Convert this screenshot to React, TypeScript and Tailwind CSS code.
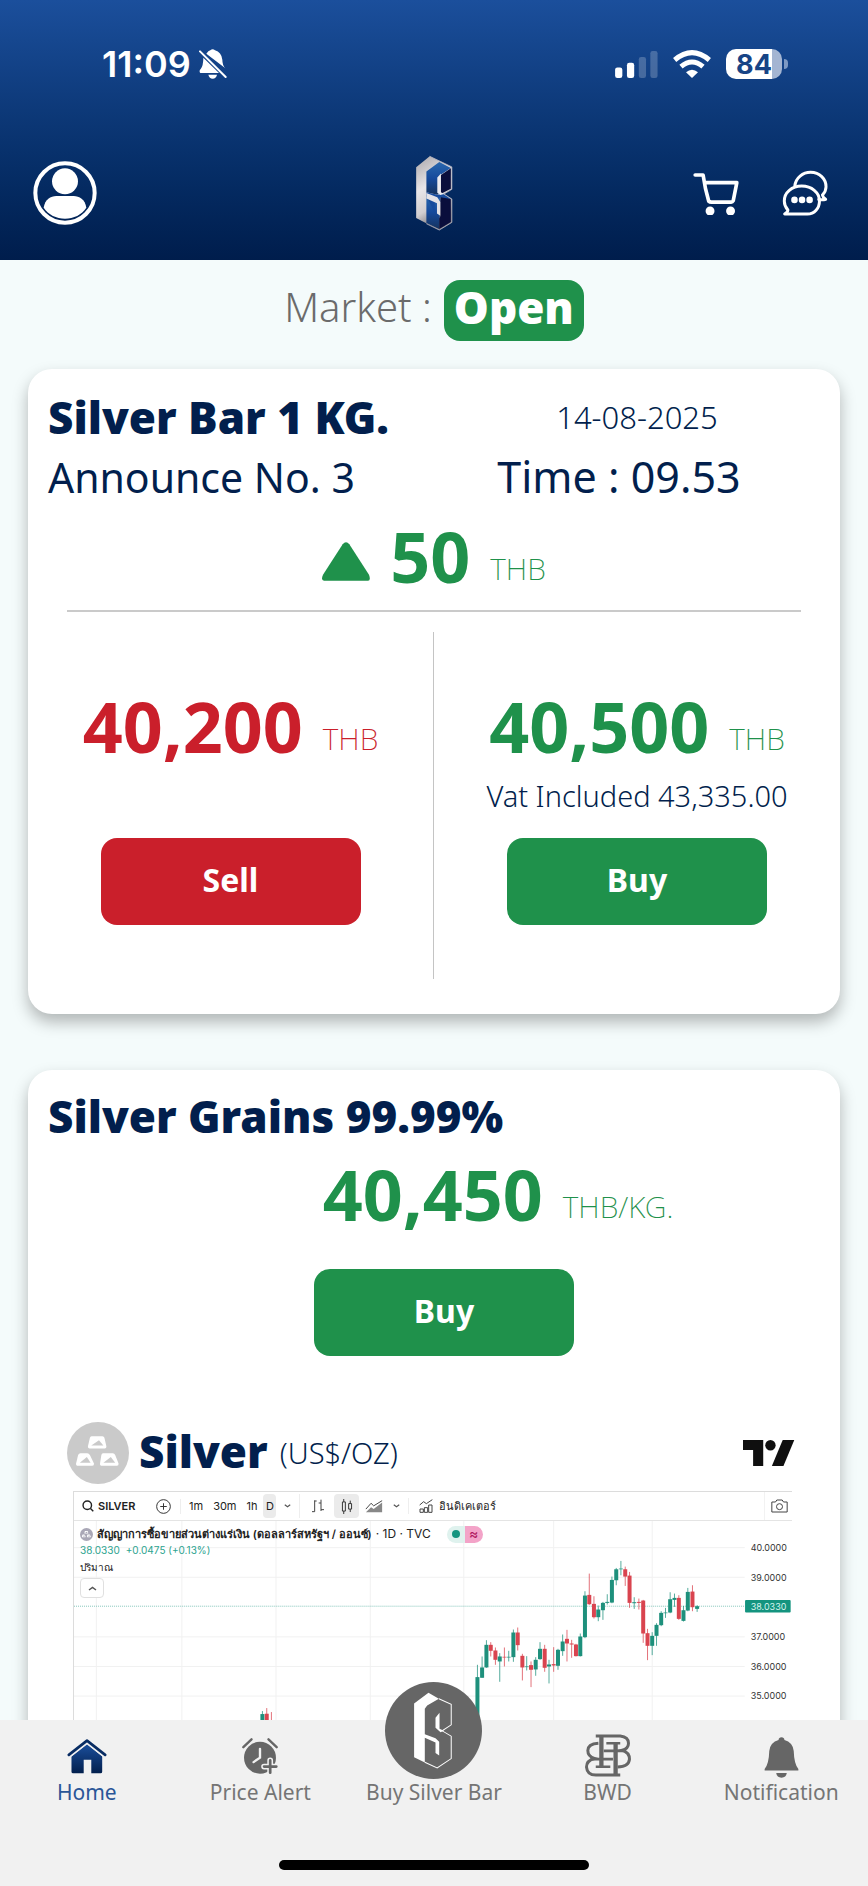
import type { ReactNode } from "react";

type Candle = [x: number, high: number, low: number, top: number, bottom: number, up: 0 | 1];

const candles: Candle[] = [
  [-535, 694, 780, 703, 770, 1],
  [-522, 685, 790, 702, 780, 0],
  [-508, 697, 780, 740, 760, 0],
  [111, 555, 760, 592, 740, 1],
  [125, 530, 594, 563, 594, 1],
  [138, 481, 564, 495, 563, 1],
  [151, 487, 530, 495, 513, 0],
  [165, 503, 555, 512, 540, 0],
  [178, 520, 606, 530, 545, 1],
  [192, 503, 560, 531, 533, 0],
  [205, 513, 545, 531, 533, 1],
  [219, 449, 546, 458, 532, 1],
  [232, 443, 512, 458, 496, 0],
  [246, 522, 602, 528, 563, 0],
  [259, 529, 572, 560, 562, 1],
  [272, 545, 622, 556, 570, 0],
  [286, 532, 588, 540, 569, 1],
  [299, 487, 540, 507, 538, 1],
  [313, 495, 576, 507, 564, 0],
  [326, 540, 611, 554, 560, 1],
  [340, 502, 576, 553, 557, 0],
  [353, 507, 570, 510, 558, 1],
  [367, 464, 528, 485, 514, 1],
  [380, 450, 545, 477, 491, 0],
  [394, 480, 534, 491, 494, 0],
  [407, 492, 530, 494, 529, 0],
  [420, 461, 530, 470, 529, 1],
  [434, 334, 475, 347, 472, 1],
  [447, 281, 375, 345, 373, 0],
  [461, 349, 416, 372, 412, 0],
  [474, 377, 424, 389, 412, 1],
  [488, 366, 420, 369, 391, 1],
  [501, 343, 374, 366, 369, 1],
  [515, 290, 370, 300, 368, 1],
  [528, 264, 316, 268, 301, 1],
  [542, 243, 286, 266, 268, 1],
  [555, 260, 318, 268, 290, 0],
  [568, 276, 384, 287, 369, 0],
  [582, 352, 387, 367, 370, 1],
  [596, 356, 389, 366, 369, 0],
  [609, 360, 489, 362, 461, 0],
  [622, 447, 541, 460, 498, 0],
  [636, 457, 526, 468, 498, 1],
  [649, 430, 498, 435, 468, 1],
  [663, 394, 439, 399, 436, 1],
  [676, 384, 414, 398, 400, 1],
  [690, 337, 400, 358, 398, 1],
  [703, 341, 381, 354, 360, 1],
  [716, 346, 420, 354, 417, 0],
  [730, 378, 425, 391, 423, 1],
  [743, 324, 394, 336, 392, 1],
  [757, 316, 394, 335, 382, 0],
  [771, 376, 396, 379, 387, 1],
];

const priceLabels: [string, number][] = [
  ["40.0000", 203],
  ["39.0000", 292],
  ["37.0000", 471],
  ["36.0000", 560],
  ["35.0000", 649],
];

function BellOff() {
  return (
    <svg viewBox="0 0 84 90" className="h-[30px] w-7" fill="white" aria-hidden="true">
      <path d="M22 14Q28 5 34 4Q41-2 48 4Q67 9 70 32Q70 48 79 58Z" />
      <path d="M13 26L60 72H4Q-1 66 5 60Q13 50 13 26Z" />
      <path d="M28 77H54Q51 89 41 89Q31 89 28 77Z" />
      <path d="M3 7L80 84" stroke="white" strokeWidth="6" strokeLinecap="round" />
    </svg>
  );
}

function Signal() {
  return (
    <svg viewBox="0 0 130 82" className="h-[27px] w-[43px]" fill="white" aria-hidden="true">
      <rect x="0" y="50" width="22" height="32" rx="7" />
      <rect x="36" y="36" width="22" height="46" rx="7" />
      <rect x="72" y="18" width="22" height="64" rx="7" opacity=".22" />
      <rect x="107" y="0" width="22" height="82" rx="7" opacity=".22" />
    </svg>
  );
}

function Wifi() {
  return (
    <svg viewBox="0 0 114 84" className="h-7 w-[38px]" fill="none" stroke="white" strokeWidth="15" aria-hidden="true">
      <path d="M5 30Q57-14 109 30" />
      <path d="M24 50Q57 22 90 50" />
      <path d="M39 67Q57 51 75 67L57 84Z" fill="white" stroke="none" />
    </svg>
  );
}

function Avatar() {
  return (
    <svg viewBox="0 0 192 192" className="size-16" fill="white" aria-hidden="true">
      <circle cx="96" cy="96" r="89" fill="none" stroke="white" strokeWidth="12" />
      <circle cx="96" cy="61" r="39" />
      <path d="M32 140C36 115 53 105 70 105H122C139 105 156 115 160 140C146 161 122 173 96 173S46 161 32 140Z" />
    </svg>
  );
}

function BrandLogo() {
  return (
    <svg viewBox="46 38 112 230" className="h-[76px] w-[38px]" role="img" aria-label="Silver">
      <defs>
        <linearGradient id="steel" x1="0" y1="0" x2=".3" y2="1">
          <stop offset="0" stopColor="#a9a6aa" />
          <stop offset=".45" stopColor="#e9e6e8" />
          <stop offset=".75" stopColor="#d2ced0" />
          <stop offset="1" stopColor="#77747a" />
        </linearGradient>
        <linearGradient id="face" x1="0" y1="0" x2="0" y2="1">
          <stop offset="0" stopColor="#2a68ae" />
          <stop offset=".5" stopColor="#164a9c" />
          <stop offset="1" stopColor="#15335f" />
        </linearGradient>
      </defs>
      <path d="M48 75L89 42L156 74V142L132 156L156 171V242L118 265L48 229Z" fill="url(#steel)" />
      <path d="M79 88L118 59L153 77L122 98V151L112 158L79 151Z" fill="url(#face)" />
      <path d="M79 160L122 159L118 262L79 244Z" fill="url(#face)" />
      <path d="M153 78V140L122 156V99Z" fill="#0a0e3c" />
      <path d="M122 156L153 172V241L118 262V230L121 224V184Z" fill="#0a0e3c" />
      <path d="M79 151L112 158L130 155L153 171L122 166L104 174V212L79 162Z" fill="#174b9d" />
      <path d="M79 153L112 166L121 180V222L111 215V184L79 170Z" fill="#e4e2e6" />
      <path d="M112 106L123 94V151L133 156L121 159L112 152Z" fill="#ecebef" />
      <path d="M89 42L156 74V142L132 156L156 171V242L118 265L79 246" fill="none" stroke="#b6b5c2" strokeWidth="2.5" />
    </svg>
  );
}

function CartIcon() {
  return (
    <svg viewBox="0 0 138 130" className="h-[43px] w-[46px]" fill="none" stroke="white" strokeWidth="11" strokeLinecap="round" strokeLinejoin="round" aria-hidden="true">
      <path d="M6 9H30Q36 52 47 88Q50 91 55 91H115Q119 91 121 87L132 32H34" />
      <circle cx="51" cy="118" r="8" fill="white" />
      <circle cx="113" cy="118" r="8" fill="white" />
    </svg>
  );
}

function ChatIcon() {
  return (
    <svg viewBox="0 0 138 140" className="h-[46px] w-[46px]" fill="none" stroke="white" strokeWidth="9" strokeLinecap="round" strokeLinejoin="round" aria-hidden="true">
      <path d="M38 48C41 24 62 7 86 7C114 7 133 27 133 51C133 61 129 69 122 76C123 82 127 86 132 89C126 91 118 91 111 90" />
      <path d="M7 134C12 131 17 127 17 122C10 114 6 104 6 94C6 68 29 49 59 49C89 49 113 68 113 94C113 116 98 134 76 134Z" />
      <g fill="white" stroke="none">
        <circle cx="37" cy="91" r="10" />
        <circle cx="60" cy="91" r="10" />
        <circle cx="83" cy="91" r="10" />
      </g>
    </svg>
  );
}

function IngotIcon({ className, disc }: { className: string; disc: string }) {
  return (
    <svg viewBox="0 0 184 184" className={className} aria-hidden="true">
      <circle cx="92" cy="92" r="92" fill={disc} />
      <g fill="white">
        <path d="M73 42H105Q110 42 111 47L117 73Q117 79 112 79H67Q62 79 62 73L68 47Q69 42 73 42Z" />
        <path d="M40 93H60Q65 93 68 98L80 123Q81 130 75 130H33Q26 130 27 123L33 98Q35 93 40 93Z" />
        <path d="M107 93H136Q141 93 143 98L153 123Q154 130 148 130H104Q97 130 98 123L102 98Q103 93 107 93Z" />
      </g>
      <g fill={disc}>
        <path d="M72 70L95 54L108 70Z" />
        <path d="M38 121L59 104L70 121Z" />
        <path d="M108 121L130 104L143 121Z" />
      </g>
    </svg>
  );
}

function TradingViewMark() {
  return (
    <svg viewBox="0 0 36 18" className="h-[26px] w-[52px]" fill="#0f0f0f" role="img" aria-label="TradingView">
      <path d="M14 18H7V7H0V0H14V18Z" />
      <circle cx="19" cy="3.6" r="3.6" />
      <path d="M28 18H20L27.500 0H35.500Z" />
    </svg>
  );
}

function HomeIcon() {
  return (
    <svg viewBox="0 0 118 106" className="h-[35px] w-10" aria-hidden="true">
      <defs>
        <linearGradient id="home" x1="0" y1="0" x2="0" y2="1">
          <stop offset="0" stopColor="#1b4f9c" />
          <stop offset="1" stopColor="#021f4d" />
        </linearGradient>
      </defs>
      <path d="M12 52L59 15L105 52V99Q105 104 100 104H72V63H49V104H17Q12 104 12 99Z" fill="url(#home)" />
      <path d="M4 50L59 7L114 50" fill="none" stroke="#f1f1f1" strokeWidth="15" />
      <path d="M4 48L59 5L114 48" fill="none" stroke="#082c63" strokeWidth="8" strokeLinecap="round" strokeLinejoin="round" />
    </svg>
  );
}

function AlarmIcon() {
  return (
    <svg viewBox="0 0 106 106" className="size-9" fill="none" strokeLinecap="round" aria-hidden="true">
      <circle cx="53" cy="58" r="47" fill="#666" />
      <path d="M4 27L28 4M78 4L102 27" stroke="#666" strokeWidth="7" />
      <path d="M53 32V58L34 71" stroke="#f1f1f1" strokeWidth="7" />
      <path d="M83 66V102M65 84H101" stroke="#f1f1f1" strokeWidth="17" />
      <path d="M83 66V102M65 84H101" stroke="#666" strokeWidth="8" />
    </svg>
  );
}

function SilverBarIcon() {
  return (
    <svg viewBox="12 11 290 290" className="-mb-[5px] size-[97px]" aria-hidden="true">
      <circle cx="157" cy="156" r="145" fill="#666" />
      <path d="M99 75L142 43L173 61L138 81L131 91V167L163 179L174 190V231L163 223V192L131 178V252L99 236Z" fill="white" />
      <path d="M163 118L175 103V151L188 157L178 161L163 148Z" fill="white" />
      <path d="M173 61L210 78V139L183 157L210 173V240L168 268L131 251" fill="none" stroke="white" strokeWidth="3" />
    </svg>
  );
}

function MonogramIcon() {
  return (
    <svg viewBox="0 0 138 130" className="-mb-[3px] h-[43px] w-[46px]" fill="none" stroke="#666" strokeWidth="9" aria-hidden="true">
      <path d="M32 6H106Q131 9 131 28Q131 44 112 49Q134 56 134 76Q132 99 98 100" />
      <path d="M49 6V100M92 28V122" strokeWidth="13" />
      <path d="M64 28H106M56 51H114M32 99H76M16 76H84" strokeWidth="8" />
      <path d="M40 28Q8 30 8 50Q8 68 28 74Q4 80 4 100Q6 124 32 124H106" />
    </svg>
  );
}

function BellIcon() {
  return (
    <svg viewBox="0 0 104 124" className="-mb-1 h-[41px] w-[35px]" fill="#666" aria-hidden="true">
      <path d="M43 9Q44 1 52 1Q60 1 61 9Q86 16 89 42Q90 80 103 97V101H1V97Q14 80 15 42Q18 16 43 9Z" />
      <path d="M36 109H68Q66 123 52 123Q38 123 36 109Z" />
    </svg>
  );
}

function Chevron({ className }: { className: string }) {
  return (
    <svg viewBox="0 0 18 10" className={className} fill="none" stroke="#555" strokeWidth="3" aria-hidden="true">
      <path d="M2 2L9 7L16 2" />
    </svg>
  );
}

function Price({ amount, unit, tone }: { amount: string; unit: string; tone: string }) {
  return (
    <p className={`flex items-end gap-5 whitespace-nowrap ${tone}`}>
      <span className="text-[70px] font-bold leading-[72px]">{amount}</span>
      <span className="mb-2 text-[30px] font-extralight leading-[30px]">{unit}</span>
    </p>
  );
}

function ActionButton({ children, tone }: { children: ReactNode; tone: string }) {
  return (
    <button type="button" className={`h-[87px] w-[260px] rounded-2xl pb-1 text-[32px] font-bold text-white ${tone}`}>
      {children}
    </button>
  );
}

function Chart() {
  return (
    <svg viewBox="0 0 2157 1000" className="block w-full" role="img" aria-label="Silver daily price chart">
      <g stroke="#f1f1f1" strokeWidth="3">
        <path d="M67 0V1000M324 0V1000M607 0V1000M890 0V1000M1171 0V1000M1441 0V1000M1737 0V1000" />
        <path d="M0 80H2015M0 169H2015M0 348H2015M0 437H2015M0 526H2015M0 615H2015" />
      </g>
      <path d="M0 256H2016" stroke="#6dbcae" strokeWidth="2.500" strokeDasharray="3 3" />
      <g transform="translate(1101 -123)">
        {candles.map(([x, high, low, top, bottom, up]) => {
          const color = up ? "#1e907c" : "#d9444f";
          return (
            <g key={x} fill={color}>
              <rect x={x - 1.5} y={high} width="3" height={low - high} opacity=".75" />
              <rect x={x - 6} y={top} width="12" height={bottom - top} />
            </g>
          );
        })}
        <rect x="915" y="360" width="137" height="38" rx="3" fill="#14947f" />
        <g fontFamily="Inter, sans-serif" fontSize="27" fill="#333">
          {priceLabels.map(([label, y]) => (
            <text key={label} x="932" y={y + 10}>
              {label}
            </text>
          ))}
          <text x="932" y="389" fill="#d8f5ee">
            38.0330
          </text>
        </g>
      </g>
    </svg>
  );
}

function ChartWidget() {
  return (
    <div className="ml-[45px] mr-12 mt-[7px] border-l border-t border-[#dcdcdc] font-['Inter','Noto_Sans',sans-serif] text-[#222]">
      <div className="flex h-[29px] items-center border-b border-[#e4e4e4] text-[11px]">
        <button type="button" className="flex w-[72px] items-center gap-1 pl-2 font-semibold">
          <svg viewBox="0 0 34 34" className="size-3 shrink-0" fill="none" stroke="#222" strokeWidth="4" aria-hidden="true">
            <circle cx="15" cy="15" r="12" />
            <path d="M24 24L32 32" />
          </svg>
          SILVER
        </button>
        <button type="button" aria-label="Compare" className="flex w-[35px] justify-center border-r border-[#eee]">
          <svg viewBox="0 0 46 46" className="size-[15px]" fill="none" stroke="#333" strokeWidth="3" aria-hidden="true">
            <circle cx="23" cy="23" r="21" />
            <path d="M23 13V33M13 23H33" />
          </svg>
        </button>
        <div className="flex items-center gap-2.5 pl-2">
          <button type="button">1m</button>
          <button type="button">30m</button>
          <button type="button">1h</button>
          <button type="button" className="-ml-1 h-6 w-[13px] rounded bg-[#ebebeb]">D</button>
          <button type="button" aria-label="More intervals" className="-ml-0.5">
            <Chevron className="h-1 w-[7px]" />
          </button>
        </div>
        <div className="ml-2 flex items-center gap-2.5 border-l border-[#eee] pl-3">
          <button type="button" aria-label="Bars">
            <svg viewBox="0 0 36 42" className="h-3.5 w-3" fill="none" stroke="#444" strokeWidth="3" aria-hidden="true">
              <path d="M0 38H8V4M8 6H14M20 12H27M27 2V36M27 32H36" />
            </svg>
          </button>
          <button type="button" aria-label="Candles" className="grid h-6 w-[25px] place-items-center rounded bg-[#ebebeb]">
            <svg viewBox="0 0 34 46" className="h-[15px] w-3" fill="none" stroke="#333" strokeWidth="3" aria-hidden="true">
              <path d="M3 9H12V37H3ZM7 0V9M7 37V46M22 14H31V31H22ZM27 5V14M27 31V40" />
            </svg>
          </button>
          <button type="button" aria-label="Area" className="-ml-1">
            <svg viewBox="0 0 54 40" className="h-[13px] w-[18px]" aria-hidden="true">
              <path d="M2 38L18 22L26 28L52 8V38Z" fill="#888" />
              <path d="M2 28L18 10L26 18L52 2" fill="none" stroke="#444" strokeWidth="3" />
            </svg>
          </button>
          <button type="button" aria-label="More chart types">
            <Chevron className="h-1 w-[7px]" />
          </button>
        </div>
        <button type="button" className="ml-2 flex items-center gap-1.5 whitespace-nowrap border-l border-[#eee] pl-2.5 text-[11px] font-medium">
          <svg viewBox="0 0 42 42" className="size-3.5" fill="none" stroke="#444" strokeWidth="3" aria-hidden="true">
            <path d="M2 18L14 8L22 14L40 2M3 40V30H13V40ZM16 40V26H26V40ZM29 40V18H39V40Z" />
          </svg>
          อินดิเคเตอร์
        </button>
        <button type="button" aria-label="Take a snapshot" className="ml-auto flex h-full items-center border-l border-[#f2f2f2] pl-1.5 pr-1">
          <svg viewBox="0 0 50 42" className="h-3.5 w-[17px]" fill="none" stroke="#444" strokeWidth="3" aria-hidden="true">
            <path d="M2 9H13L17 3H33L37 9H48V39H2Z" strokeLinejoin="round" />
            <circle cx="25" cy="23" r="9" />
          </svg>
        </button>
      </div>
      <div className="relative">
        <Chart />
        <div className="absolute left-1.5 top-1 flex flex-col items-start">
          <div className="flex h-[18px] items-center gap-1 whitespace-nowrap text-[12px] font-medium">
            <IngotIcon className="size-[13px]" disc="#a9a7b6" />
            <span className="text-[11px] font-semibold">สัญญาการซื้อขายส่วนต่างแร่เงิน (ดอลลาร์สหรัฐฯ / ออนซ์)</span>
            <span className="font-normal">· 1D · TVC</span>
            <span className="ml-3 flex h-[17px] w-9 overflow-hidden rounded-full">
              <span className="grid flex-1 place-items-center bg-[#dff2ee]">
                <span className="size-2 rounded-full bg-[#159580]" />
              </span>
              <span className="grid flex-1 place-items-center bg-[#f3a3c8] text-[14px] leading-none text-[#b0175f]">≈</span>
            </span>
          </div>
          <p className="flex gap-1.5 text-[10px] leading-[15px] text-[#2ba38f]">
            <span>38.0330</span>
            <span>+0.0475 (+0.13%)</span>
          </p>
          <p className="text-[10px] leading-[18px]">ปริมาณ</p>
          <button type="button" aria-label="Collapse legend" className="mt-0.5 grid h-5 w-6 place-items-center rounded-sm border border-[#e0e0e0] bg-white">
            <Chevron className="h-[5px] w-[9px] rotate-180" />
          </button>
        </div>
      </div>
    </div>
  );
}

function NavItem({ label, icon, active = false }: { label: string; icon: ReactNode; active?: boolean }) {
  return (
    <a href="#" className={`flex flex-col items-center whitespace-nowrap text-[21px] leading-7 ${active ? "text-[#2a5698]" : "text-[#757575]"}`}>
      <span className="flex h-[58px] items-end justify-center">{icon}</span>
      <span className="mt-1">{label}</span>
    </a>
  );
}

export default function App() {
  return (
    <div className="flex h-screen flex-col overflow-hidden bg-[#f4fbfb] font-['Noto_Sans','Open_Sans',sans-serif] text-[#021f4d]">
      <header className="flex h-[260px] shrink-0 flex-col bg-linear-to-b from-[#1b4f9c] to-[#001d4c]">
        <div className="flex h-32 items-center justify-between pl-[102px] pr-20 text-white">
          <div className="flex items-center gap-2">
            <span className="font-['Inter'] text-[36px] font-semibold">11:09</span>
            <BellOff />
          </div>
          <div className="flex items-center gap-[15px]">
            <Signal />
            <Wifi />
            <div className="flex items-center gap-0.5">
              <div className="flex h-[30px] w-14 items-center justify-center rounded-[10px] bg-linear-to-r from-white from-83% to-[#a4b5d2] to-83% font-['Inter'] text-[27px] font-bold leading-none text-[#174486]">
                84
              </div>
              <span className="h-2.5 w-1 rounded-r-full bg-[#7d99c4]" />
            </div>
          </div>
        </div>
        <div className="grid h-[130px] grid-cols-3 items-center pl-[33px] pr-10">
          <button type="button" aria-label="Profile" className="justify-self-start">
            <Avatar />
          </button>
          <div className="justify-self-center pl-1.5">
            <BrandLogo />
          </div>
          <div className="flex items-center gap-[43px] justify-self-end">
            <button type="button" aria-label="Cart">
              <CartIcon />
            </button>
            <button type="button" aria-label="Messages">
              <ChatIcon />
            </button>
          </div>
        </div>
      </header>

      <main className="min-h-0 flex-1 overflow-y-auto px-7 pt-5 [scrollbar-width:none]">
        <div className="flex items-center justify-center gap-3 text-[40px] leading-[54px]">
          <span className="pb-[7px] font-light text-[#6b6b6b]">Market :</span>
          <span className="rounded-2xl bg-[#1f914b] px-2.5 pb-[7px] text-[44px] font-black text-white">Open</span>
        </div>

        <section className="mt-7 rounded-3xl bg-white pb-[35px] pt-[18px] shadow-[0_8px_16px_rgba(0,0,0,0.28)]">
          <div className="grid grid-cols-2 leading-[60px]">
            <h2 className="whitespace-nowrap pl-5 text-[44px] font-black">Silver Bar 1 KG.</h2>
            <p className="text-center text-[31px] font-light">14-08-2025</p>
            <p className="pl-5 text-[41px]">Announce No. 3</p>
            <p className="pr-9 text-center text-[43px]">Time : 09.53</p>
          </div>
          <div className="flex justify-center gap-5 pt-[13px] text-[#1f914b]">
            <svg viewBox="0 0 144 116" className="mt-[22px] h-[39px] w-12" fill="currentColor" role="img" aria-label="Up">
              <path d="M62 6Q72-5 82 6L141 98Q147 115 138 116H6Q-4 115 3 98Z" />
            </svg>
            <Price amount="50" unit="THB" tone="text-[#1f914b]" />
          </div>
          <hr className="mx-[39px] mt-[18px] border-t-2 border-[#cacaca]" />
          <div className="mt-5 grid h-[347px] grid-cols-2">
            <div className="flex flex-col items-center border-r border-[#c4c4c4] pt-[58px]">
              <Price amount="40,200" unit="THB" tone="text-[#ca1f2b]" />
              <div className="mt-[76px]">
                <ActionButton tone="bg-[#ca1f2b]">Sell</ActionButton>
              </div>
            </div>
            <div className="flex flex-col items-center pt-[58px]">
              <Price amount="40,500" unit="THB" tone="text-[#1f914b]" />
              <p className="whitespace-nowrap pt-3.5 text-[29px] font-light leading-[40px]">Vat Included 43,335.00</p>
              <div className="mt-[22px]">
                <ActionButton tone="bg-[#1f914b]">Buy</ActionButton>
              </div>
            </div>
          </div>
        </section>

        <section className="mt-14 rounded-3xl bg-white pt-4 shadow-[0_8px_16px_rgba(0,0,0,0.28)]">
          <h2 className="pl-5 text-[44px] font-black leading-[60px]">Silver Grains 99.99%</h2>
          <div className="flex justify-center pl-32 pt-3">
            <Price amount="40,450" unit="THB/KG." tone="text-[#1f914b]" />
          </div>
          <div className="flex justify-center pl-5 pt-[39px]">
            <ActionButton tone="bg-[#1f914b]">Buy</ActionButton>
          </div>
          <div className="mt-[66px] flex items-center pl-[39px] pr-[45px]">
            <IngotIcon className="size-[62px]" disc="#cacaca" />
            <h2 className="ml-2.5 pb-1 text-[44px] font-black leading-[58px]">Silver</h2>
            <span className="ml-3 text-[29px] font-light">(US$/OZ)</span>
            <a href="#" className="ml-auto">
              <TradingViewMark />
            </a>
          </div>
          <ChartWidget />
        </section>
      </main>

      <nav className="relative flex h-[166px] shrink-0 flex-col justify-between bg-[#f1f1f1] pb-4">
        <div className="-mt-1 grid grid-cols-5">
          <NavItem label="Home" icon={<HomeIcon />} active />
          <NavItem label="Price Alert" icon={<AlarmIcon />} />
          <NavItem label="Buy Silver Bar" icon={<SilverBarIcon />} />
          <NavItem label="BWD" icon={<MonogramIcon />} />
          <NavItem label="Notification" icon={<BellIcon />} />
        </div>
        <div className="mx-auto h-2.5 w-[310px] rounded-full bg-black" />
      </nav>
    </div>
  );
}
